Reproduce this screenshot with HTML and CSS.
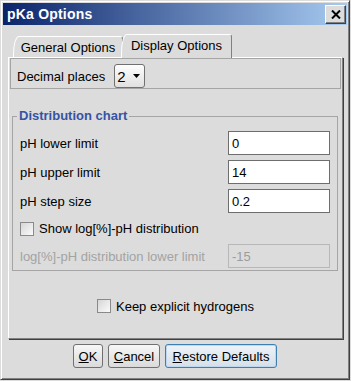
FILE: index.html
```html
<!DOCTYPE html>
<html>
<head>
	<meta charset="utf-8">
	<title>pKa Options</title>
	<link rel="stylesheet" href="styles.css">
</head>
<body>
<div class="window">

	<div class="titlebar">
		<span class="title">pKa Options</span>
		<span class="close">
			<svg width="10" height="9" viewBox="0 0 10 9"><path d="M1 0.5 L9 8.5 M9 0.5 L1 8.5" stroke="#000" stroke-width="2"/></svg>
		</span>
	</div>

	<div class="tabs">
		<div class="tab">General Options</div>
		<div class="tab selected">Display Options</div>
	</div>

	<div class="panel">

		<div class="decimal">
			<span>Decimal places</span>
			<div class="combo">
				<span>2</span>
				<svg width="7" height="4" viewBox="0 0 7 4"><path d="M0 0 H7 L3.5 4 Z" fill="#000"/></svg>
			</div>
		</div>

		<fieldset class="chart">
			<legend>Distribution chart</legend>
			<div class="rows">
				<div class="row">
					<label for="lower">pH lower limit</label>
					<input class="field" id="lower" type="text" value="0">
				</div>
				<div class="row">
					<label for="upper">pH upper limit</label>
					<input class="field" id="upper" type="text" value="14">
				</div>
				<div class="row">
					<label for="step">pH step size</label>
					<input class="field" id="step" type="text" value="0.2">
				</div>
				<div class="check-row">
					<span class="checkbox"></span>
					<span>Show log[%]-pH distribution</span>
				</div>
				<div class="row disabled">
					<label for="loglimit">log[%]-pH distribution lower limit</label>
					<input class="field" id="loglimit" type="text" value="-15" disabled>
				</div>
			</div>
		</fieldset>

		<div class="keep">
			<span class="checkbox"></span>
			<span>Keep explicit hydrogens</span>
		</div>

	</div>

	<div class="buttons">
		<button class="button btn-ok"><u>O</u>K</button>
		<button class="button btn-cancel"><u>C</u>ancel</button>
		<button class="button btn-restore"><u>R</u>estore Defaults</button>
	</div>

</div>
</body>
</html>
```

FILE: styles.css
```css
body {
	margin: 0;
	background-color: #dcdcdc;
	font-family: "Liberation Sans", Arial, sans-serif;
	font-size: 13px;
	color: #000;
}

.window {
	width: 350px;
	height: 380px;
	box-sizing: border-box;
	border: 1px solid;
	border-color: #dcdcdc #404040 #404040 #dcdcdc;
	box-shadow: inset 1px 1px #fff, inset -1px -1px #808080;
	padding: 2px;
	display: flex;
	flex-direction: column;
}

/* barra de titulo */
.titlebar {
	height: 22px;
	display: flex;
	align-items: center;
	justify-content: space-between;
	padding: 0 1px 0 4px;
	background: linear-gradient(to right, #0a246a, #a6caf0);
}

.title {
	color: #fff;
	font-weight: bold;
	font-size: 14px;
	letter-spacing: 0.2px;
}

.close {
	width: 21px;
	height: 19px;
	box-sizing: border-box;
	background-color: #dcdcdc;
	border: 1px solid;
	border-color: #fff #404040 #404040 #fff;
	box-shadow: inset -1px -1px #808080;
	display: flex;
	align-items: center;
	justify-content: center;
}

/* abas */
.tabs {
	display: flex;
	align-items: flex-end;
	height: 23px;
	margin-top: 9px;
	padding-left: 10px;
}

.tab {
	width: 110px;
	height: 21px;
	box-sizing: border-box;
	border: 1px solid;
	border-bottom: none;
	border-color: #fff #808080 transparent #fff;
	border-radius: 6px 3px 0 0 / 18px 3px 0 0;
	display: flex;
	align-items: center;
	justify-content: center;
}

.tab.selected {
	width: 111px;
	height: 24px;
	margin-left: -2px;
	margin-bottom: -1px;
	position: relative;
	z-index: 1;
	background-color: #dcdcdc;
	padding-bottom: 2px;
}

.panel {
	height: 282px;
	box-sizing: border-box;
	margin: 0 4px 0 5px;
	border: 1px solid;
	border-color: #fff #808080 #808080 #fff;
	box-shadow: 1px 1px #404040;
	display: flex;
	flex-direction: column;
}

.decimal {
	margin: 0 1px;
	border: 1px solid #a5a5a5;
	padding: 5px 6px 0;
	display: flex;
	align-items: center;
	gap: 9px;
}

.combo {
	width: 31px;
	height: 24px;
	box-sizing: border-box;
	border: 1px solid #707070;
	border-radius: 3px;
	background: linear-gradient(#fdfdfd, #e0e0e0);
	display: flex;
	align-items: center;
	justify-content: space-between;
	padding: 0 4px 0 2px;
	font-size: 15px;
}

/* grupo do grafico */
.chart {
	margin: 19px 4px 0 3px;
	padding: 7px 7px 2px;
	border: 1px solid #a5a5a5;
	min-width: 0;
}

.chart legend {
	padding: 0 2px;
	margin-left: -3px;
	font-weight: bold;
	font-size: 13px;
	line-height: 16px;
	color: #3553a5;
}

.rows {
	display: flex;
	flex-direction: column;
	gap: 5px;
}

.row {
	height: 24px;
	display: flex;
	justify-content: space-between;
	align-items: center;
}

.field {
	width: 102px;
	height: 24px;
	box-sizing: border-box;
	margin: 0;
	border: 1px solid #6e6e6e;
	padding: 0 3px;
	font-family: "Liberation Sans", Arial, sans-serif;
	font-size: 13px;
	color: #000;
	background-color: #fff;
	outline: none;
}

.disabled label {
	color: #a3a3a3;
}

.disabled .field {
	border-color: #b8b8b8;
	background-color: #dcdcdc;
	color: #9c9c9c;
}

.check-row {
	height: 21px;
	display: flex;
	align-items: center;
	gap: 5px;
}

.checkbox {
	width: 14px;
	height: 14px;
	box-sizing: border-box;
	border: 1px solid #8a8a8a;
	background: linear-gradient(to bottom right, #d6d6d6, #fbfbfb);
}

.keep {
	height: 14px;
	margin-top: 28px;
	display: flex;
	justify-content: center;
	align-items: center;
	gap: 5px;
}

/* botoes */
.buttons {
	display: flex;
	justify-content: center;
	gap: 5px;
	margin-top: 5px;
}

.button {
	height: 24px;
	box-sizing: border-box;
	padding: 0;
	border: 1px solid #707070;
	border-radius: 3px;
	background: linear-gradient(#f7f7f7, #dadada);
	font-family: "Liberation Sans", Arial, sans-serif;
	font-size: 13px;
	color: #000;
}

.btn-ok {
	width: 30px;
}

.btn-cancel {
	width: 52px;
}

.btn-restore {
	width: 112px;
	border-color: #3c7fb1;
	box-shadow: inset 0 0 0 1px #bcd8f0;
	background: linear-gradient(#eef3f8, #d6dfe8);
}
```
